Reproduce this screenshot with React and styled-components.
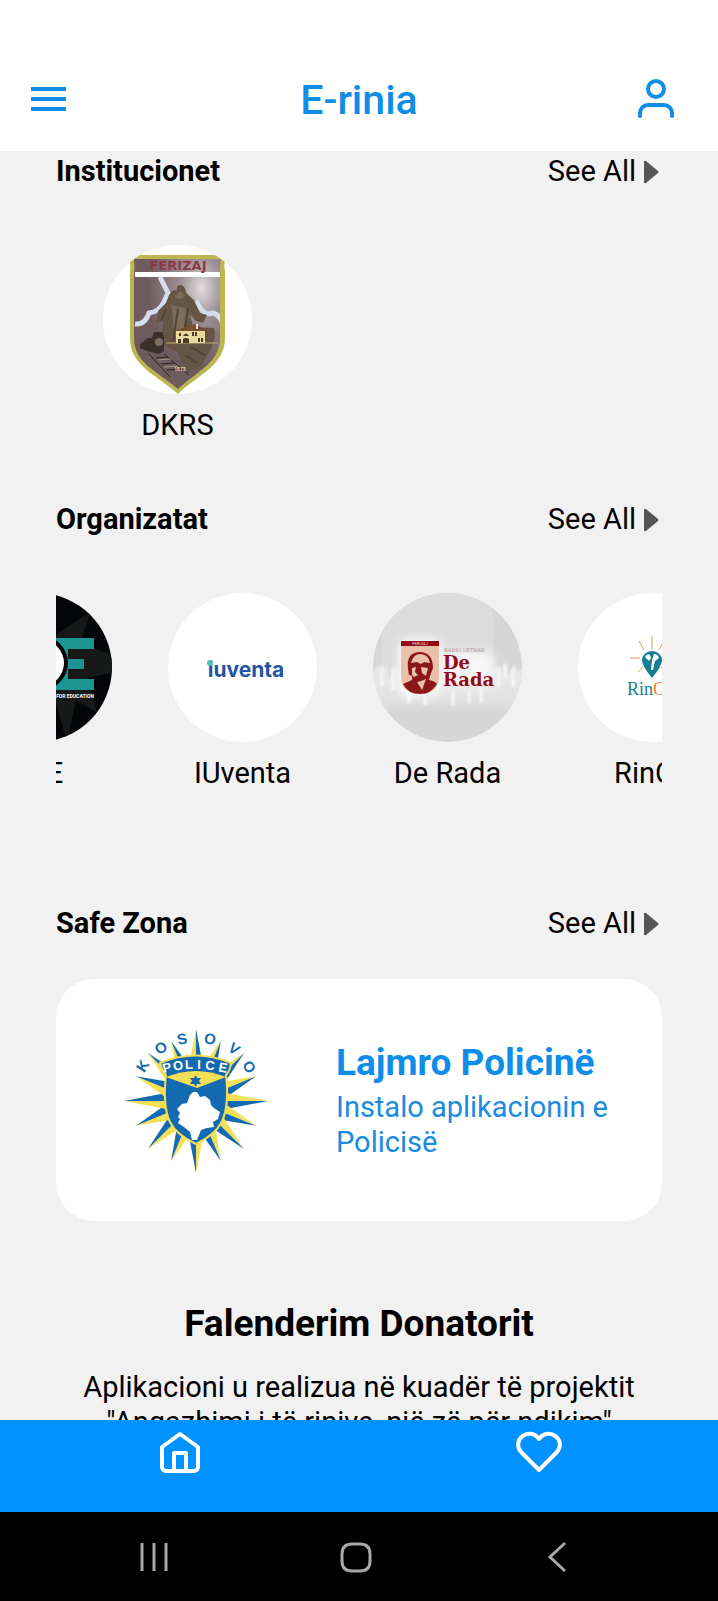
import React, { useLayoutEffect, useRef } from "react";
import styled, { createGlobalStyle } from "styled-components";

const Global = createGlobalStyle`
  * { box-sizing: border-box; }
  body { margin: 0; background: #f1f1f1; font-family: Roboto, "Liberation Sans", sans-serif; color: #000; }
  button, a { font: inherit; color: inherit; }
`;

const Screen = styled.div`
  height: 100vh;
  display: flex;
  flex-direction: column;
  overflow: hidden;
`;

const Header = styled.header`
  flex: none;
  display: flex;
  align-items: center;
  justify-content: space-between;
  padding: 72px 28px 23px;
  background: #fff;
  color: #0f8ee9;
`;

const AppTitle = styled.h1`
  margin: 0;
  font-size: 41px;
  line-height: 56px;
  font-weight: 500;
`;

const IconButton = styled.button`
  display: grid;
  align-items: center;
  justify-items: ${(p) => p.$align || "center"};
  min-width: ${(p) => p.$width || 0}px;
  padding: 0;
  border: 0;
  background: none;
  cursor: pointer;
`;

const Content = styled.main`
  flex: 1;
  min-height: 0;
  overflow-y: auto;
  scrollbar-width: none;
  padding: 0 56px;
  font-size: 29px;
  line-height: 35px;
`;

const Section = styled.section`
  padding-top: ${(p) => p.$space}px;
`;

const SectionHead = styled.div`
  display: flex;
  align-items: center;
  justify-content: space-between;
`;

const SectionTitle = styled.h2`
  margin: 0;
  font-size: 29px;
  font-weight: 700;
`;

const SeeAll = styled.a`
  display: flex;
  align-items: center;
  gap: 8px;
  padding-right: 3px;
  text-decoration: none;
`;

const Row = styled.div`
  display: flex;
  gap: 56px;
  margin-top: 56px;
  padding: 0 47px;
  overflow-x: auto;
  scrollbar-width: none;
`;

const Item = styled.a`
  flex: none;
  width: 149px;
  display: flex;
  flex-direction: column;
  align-items: center;
  gap: 14px;
  text-decoration: none;
  white-space: nowrap;
`;

const Avatar = styled.div`
  width: 149px;
  height: 149px;
  border-radius: 50%;
  overflow: hidden;
  background: #fff;
  svg { display: block; }
`;

const Card = styled.a`
  display: flex;
  align-items: center;
  gap: 68px;
  margin-top: 38px;
  padding: 48px 40px 48px 66px;
  border-radius: 38px;
  background: #fff;
  color: #1a8be0;
  text-decoration: none;
  svg { flex: none; }
`;

const CardTitle = styled.strong`
  display: block;
  margin-bottom: 4px;
  font-size: 37px;
  line-height: 46px;
  color: #0f8ee9;
`;

const Thanks = styled.section`
  padding-top: 80px;
  text-align: center;
`;

const ThanksTitle = styled.h2`
  margin: 0 0 23px;
  font-size: 37px;
  line-height: 46px;
`;

const ThanksText = styled.p`
  margin: 0;
`;

const TabBar = styled.nav`
  flex: none;
  display: flex;
  height: 92px;
  padding-top: 8px;
  background: #0092ff;
  color: #fff;
`;

const Tab = styled.a`
  flex: 1;
  display: flex;
  justify-content: center;
`;

const SystemBar = styled.div`
  flex: none;
  display: flex;
  justify-content: space-between;
  height: 89px;
  padding: 0 136px 0 130px;
  background: #000;
  color: #a8a8a8;
`;

const MenuIcon = () => (
  <svg width="40" height="40" viewBox="0 0 40 40" stroke="currentColor" strokeWidth="4">
    <path d="M3 9h35M3 19h35M3 29h35" />
  </svg>
);

const UserIcon = () => (
  <svg width="44" height="44" viewBox="0 0 44 44" fill="none" stroke="currentColor" strokeWidth="4" strokeLinecap="round">
    <circle cx="22" cy="11" r="8" />
    <path d="M6 38v-3a8 8 0 0 1 8-8h16a8 8 0 0 1 8 8v3" />
  </svg>
);

const Arrow = () => (
  <svg width="15" height="24" viewBox="0 0 15 24" fill="#555">
    <path d="M0 2Q0 0 2 1L14 11Q15 12 14 13L2 23Q0 24 0 22Z" />
  </svg>
);

const FerizajLogo = () => (
  <svg width="149" height="149" viewBox="0 0 149 149">
    <defs>
      <radialGradient id="sky" cx="0.76" cy="0.22" r="0.6">
        <stop offset="0" stopColor="#e2dedf" />
        <stop offset="0.4" stopColor="#9b8e94" />
        <stop offset="1" stopColor="#6f5b5e" />
      </radialGradient>
      <clipPath id="shield"><path d="M31 14H118Q117 18 117 24V93C117 118 94 126 75 144C54 126 31 118 31 93V30Q32 22 31 14Z" /></clipPath>
    </defs>
    <path d="M30 10H119L123 14Q120 20 122 26V93C122 121 94 130 75 149C54 130 27 121 27 93V28Q28 18 26 15Z" fill="#bdb452" />
    <g clipPath="url(#shield)">
      <rect x="30" y="14" width="90" height="132" fill="url(#sky)" />
      <path d="M32 79Q42 80 46 68Q56 67 61 57L65 48L57 32M93 56Q101 72 109 68Q115 68 119 77" fill="none" stroke="#d6dded" strokeWidth="5" />
      <path d="M66 50L69 46L74 45Q73 40 78 40Q83 42 83 48L91 55L97 68L104 70L100 78L93 76L87 69L90 82L111 83Q114 92 108 104L98 121L84 127L74 107L58 99L60 76L53 79L55 66L63 58Z" fill="#665444" />
      <path d="M72 51l5-5 5 4-3 4-7-1zM68 60l14 3 5 9-6 8-1 12-9-1-2-25z" fill="#7e6b58" />
      <path d="M75 64l-5 33M85 63l-3 19M88 102l14 8M82 110l12 8M63 65l-5 10" stroke="#514235" strokeWidth="2" />
      <path d="M63 98H115" stroke="#c1ad73" />
      <path d="M68 87L92 79L107 87Z" fill="#74502f" />
      <path d="M73 86H102V98H73Z" fill="#e9dba0" />
      <path d="M93 79h2v5h-2z" fill="#f5edc8" />
      <path d="M76 88h2v3h-2zM80 91q3-5 6 0zM89 87h2v4h-2zM92 87h2v4h-2zM75 94h3v4h-3zM80 98v-4q3-2 6 0v4zM95 93h2v4h-2zM98 93h2v4h-2z" fill="#4b3925" />
      <path d="M37 99l8-6h4l2-6h8l2 5v14l-5 3-12-3-7-3z" fill="#3b302a" />
      <circle cx="56" cy="97" r="4" fill="#7d6e61" />
      <path d="M46 109l21 23M61 109l25 21M53 113l12-1M58 119l14-1M64 125l15-1" stroke="#2e2420" fill="none" />
      <path d="M55 115l13-1M61 122l14-1" stroke="#a3937d" fill="none" />
    </g>
    <rect x="32" y="27" width="85" height="5" fill="#fff" />
    <text x="75" y="25" textAnchor="middle" fontSize="13" fontWeight="700" fontFamily="DejaVu Sans, sans-serif" fill="#8e3945">FERIZAJ</text>
    <text x="77" y="126" textAnchor="middle" fontSize="5" fontWeight="700" fill="#e5d9a6">1873</text>
  </svg>
);

const EducationLogo = () => (
  <svg width="149" height="149" viewBox="0 0 149 149">
    <rect width="149" height="149" fill="#040508" />
    <path d="M93 42L128 18L117 50L149 62V80L125 84L134 120L113 107L104 149L90 100Z" fill="#171918" />
    <path d="M80 45H131V56H105V66H121V76H105V86H131V97H80Z" fill="#1d9693" />
    <circle cx="78" cy="70" r="27" fill="#040508" />
    <circle cx="78" cy="70" r="23" fill="#fff" />
    <text x="131" y="105" textAnchor="end" fontSize="5" fontWeight="700" fill="#fff">FOR EDUCATION</text>
  </svg>
);

const IuventaLogo = () => (
  <svg width="149" height="149" viewBox="0 0 149 149">
    <text x="78" y="84" textAnchor="middle" fontSize="21" fontWeight="700" fontFamily="Inter, sans-serif" fill="#2256a5">iuventa</text>
    <circle cx="42" cy="70" r="3" fill="#53bdb9" />
  </svg>
);

const DeRadaLogo = () => (
  <svg width="149" height="149" viewBox="0 0 149 149">
    <defs>
      <filter id="soft" x="-30%" y="-30%" width="160%" height="160%"><feGaussianBlur stdDeviation="5" /></filter>
      <filter id="crowd"><feGaussianBlur stdDeviation="1" /></filter>
      <linearGradient id="stage" x1="0" y1="0" x2="0" y2="1">
        <stop offset="0" stopColor="#ebebeb" />
        <stop offset="0.7" stopColor="#e2e2e2" />
        <stop offset="1" stopColor="#d6d6d6" />
      </linearGradient>
    </defs>
    <rect width="149" height="149" fill="#d6d6d6" />
    <path d="M8 0H120V80H8Z" fill="#dcdcdc" />
    <path d="M0 80l5-9 4 9 5-8 3 14 6-16 5 12 5 5h82l5-12 4-3 4 12 4-16 4 14 5-12 4 9 4-4v46H0z" fill="url(#stage)" filter="url(#crowd)" />
    <path d="M9 73v20M20 75v22M126 74v20M132 72v14M140 76v18M36 96v14M52 104v8M80 98v14M96 98v12M108 96v14" stroke="#f3f3f3" strokeWidth="4" filter="url(#crowd)" />
    <rect x="26" y="46" width="42" height="56" rx="8" fill="#fff" filter="url(#soft)" />
    <rect x="69" y="58" width="52" height="36" rx="8" fill="#f6f6f6" filter="url(#soft)" />
    <path d="M28 48H66V83Q66 101 47 101T28 83Z" fill="#e9c1aa" />
    <path d="M28 48H66V53H28Z" fill="#930c15" />
    <path d="M35 76Q33 60 46 59Q60 59 60 75L57 83L56 87Q62 88 64 91Q58 101 47 101Q35 101 30 91L39 87V83L36 82Z" fill="#8c1719" />
    <path d="M38 70q2-9 10-9 8 1 9 9l-6-1-3 2-4-2zM39 75l4-1-1 5 3 3-4 2-2-2zM48 74l7 1-2 8-4-3zM44 89l4-1 5-2-4 11z" fill="#e9c1aa" />
    <text x="47" y="52" textAnchor="middle" fontSize="4" fill="#f3d6cb">FERIZAJ</text>
    <text x="71" y="59" fontSize="5" fontFamily="DejaVu Serif, serif" fill="#a88">RADIO LETRAR</text>
    <g fontFamily="DejaVu Serif, serif" fontWeight="700" fontSize="18" fill="#930c15">
      <text x="70" y="76">De</text>
      <text x="70" y="93">Rada</text>
    </g>
  </svg>
);

const RinLogo = () => (
  <svg width="149" height="149" viewBox="0 0 149 149">
    <path d="M74 43V56M61 48l5 9M86 48l-5 9M52 65H62M87 65H98M60 79l5-5M88 79l-5-5" stroke="#e29a4f" fill="none" />
    <path d="M74 85Q64 73 64 67a10 9 0 0 1 20 0q0 6-10 18Z" fill="#187c94" />
    <path d="M67 64q2-4 5-2l1 3-2 3zM76 61q4 0 5 4l-4 3-2 9h-2l1-10z" fill="#fff" />
    <text x="49" y="102" fontFamily="Liberation Serif, serif" fontSize="18" fill="#187c94">Rin<tspan fill="#e47d22">On</tspan></text>
  </svg>
);

const RAYS = Array.from({ length: 16 }, (_, i) => i);
const KOSOVO = [
  ["K", 21, 39, -58], ["O", 39, 21, -36], ["S", 60, 12, -12],
  ["O", 88, 12, 12], ["V", 112, 22, 36], ["O", 127, 40, 58],
];
const POLICE = [
  ["P", 45, 41, -14], ["O", 56, 39, -9], ["L", 67, 38, -4],
  ["I", 77, 38, 0], ["C", 88, 39, 5], ["E", 101, 41, 10],
];

const PoliceLogo = () => (
  <svg width="146" height="146" viewBox="0 0 146 146">
    <g transform="translate(74 74)">
      {RAYS.map((i) => {
        const len = i % 4 === 0 ? 72 : i % 2 === 0 ? 68 : 65;
        return (
          <g key={i} transform={`rotate(${i * 22.5})`}>
            <path d={`M0 ${-len}L-8 -30L0 -20Z`} fill="#f5df55" />
            <path d={`M0 ${-len}L8 -30L0 -20Z`} fill="#146ab0" />
          </g>
        );
      })}
    </g>
    <path d="M38 36Q74 21 109 36Q108 44 104 48C109 93 97 106 74 117C50 106 39 93 44 48Q40 44 38 36Z" fill="#146ab0" stroke="#f5df55" strokeWidth="2" />
    <path d="M44 50Q74 38 104 50L75 61Z" fill="#f5df55" />
    <path d="M74 48l1 3h4l-2 3 2 3h-4l-1 3-2-3h-4l2-3-2-3h4z" fill="#146ab0" />
    <path d="M75 65L78 70L83 69L88 73L89 78L92 81L98 85L96 92L91 95L92 100L85 101L79 103L75 113H70L68 105L62 100L56 96L58 92L56 90L58 86L55 82L60 77L65 76L68 68L71 65Z" fill="#fff" />
    <g fontFamily="Liberation Sans, sans-serif" fontWeight="700" textAnchor="middle">
      {KOSOVO.map(([c, x, y, r], i) => (
        <text key={i} transform={`translate(${x} ${y}) rotate(${r})`} y="5" fontSize="15" fill="#146ab0" stroke="#fff" strokeWidth="3" paintOrder="stroke">{c}</text>
      ))}
      {POLICE.map(([c, x, y, r], i) => (
        <text key={i} transform={`translate(${x} ${y}) rotate(${r})`} y="4" fontSize="13" fill="#fff">{c}</text>
      ))}
    </g>
  </svg>
);

const HomeIcon = () => (
  <svg width="48" height="48" viewBox="0 0 48 48" fill="none" stroke="currentColor" strokeWidth="4" strokeLinejoin="round">
    <path d="M6 19L24 6L42 19V39a4 4 0 0 1-4 4H10a4 4 0 0 1-4-4Z" />
    <path d="M18 43V25H30V43" />
  </svg>
);

const HeartIcon = () => (
  <svg width="48" height="48" viewBox="0 0 48 48" fill="none" stroke="currentColor" strokeWidth="4" strokeLinejoin="round">
    <path d="M24 42L6 24C-4 12 14 -2 24 11C34 -2 52 12 42 24Z" />
  </svg>
);

const SystemIcon = ({ d }) => (
  <svg width="50" height="50" viewBox="0 0 50 50" fill="none" stroke="currentColor" strokeWidth="3">
    <path d={d} />
  </svg>
);

const ORGANISATIONS = [
  ["AYE", EducationLogo],
  ["IUventa", IuventaLogo],
  ["De Rada", DeRadaLogo],
  ["RinOn", RinLogo],
];

const Heading = ({ children }) => (
  <SectionHead>
    <SectionTitle>{children}</SectionTitle>
    <SeeAll href="#">See All<Arrow /></SeeAll>
  </SectionHead>
);

const Carousel = ({ items, start = 0 }) => {
  const row = useRef(null);
  useLayoutEffect(() => {
    row.current.scrollLeft = start;
  }, [start]);
  return (
    <Row ref={row}>
      {items.map(([name, Logo]) => (
        <Item href="#" key={name}>
          <Avatar><Logo /></Avatar>
          {name}
        </Item>
      ))}
    </Row>
  );
};

export default function App() {
  return (
    <Screen>
      <Global />
      <Header>
        <IconButton aria-label="Menu" $width={68} $align="start"><MenuIcon /></IconButton>
        <AppTitle>E-rinia</AppTitle>
        <IconButton aria-label="Profile" $width={68}><UserIcon /></IconButton>
      </Header>
      <Content>
        <Section $space={3}>
          <Heading>Institucionet</Heading>
          <Carousel items={[["DKRS", FerizajLogo]]} />
        </Section>
        <Section $space={59}>
          <Heading>Organizatat</Heading>
          <Carousel items={ORGANISATIONS} start={140} />
        </Section>
        <Section $space={115}>
          <Heading>Safe Zona</Heading>
          <Card href="#">
            <PoliceLogo />
            <div>
              <CardTitle>Lajmro Policinë</CardTitle>
              Instalo aplikacionin e Policisë
            </div>
          </Card>
        </Section>
        <Thanks>
          <ThanksTitle>Falenderim Donatorit</ThanksTitle>
          <ThanksText>Aplikacioni u realizua në kuadër të projektit "Angazhimi i të rinive, një zë për ndikim"</ThanksText>
        </Thanks>
      </Content>
      <TabBar>
        <Tab href="#" aria-label="Home"><HomeIcon /></Tab>
        <Tab href="#" aria-label="Favourites"><HeartIcon /></Tab>
      </TabBar>
      <SystemBar>
        <IconButton aria-label="Recents"><SystemIcon d="M12 11V39M24 11V39M36 11V39" /></IconButton>
        <IconButton aria-label="System home"><SystemIcon d="M21 12h8q10 0 10 10v7q0 10-10 10h-8q-10 0-10-10v-7q0-10 10-10z" /></IconButton>
        <IconButton aria-label="Back"><SystemIcon d="M33 11L18 25L33 39" /></IconButton>
      </SystemBar>
    </Screen>
  );
}
